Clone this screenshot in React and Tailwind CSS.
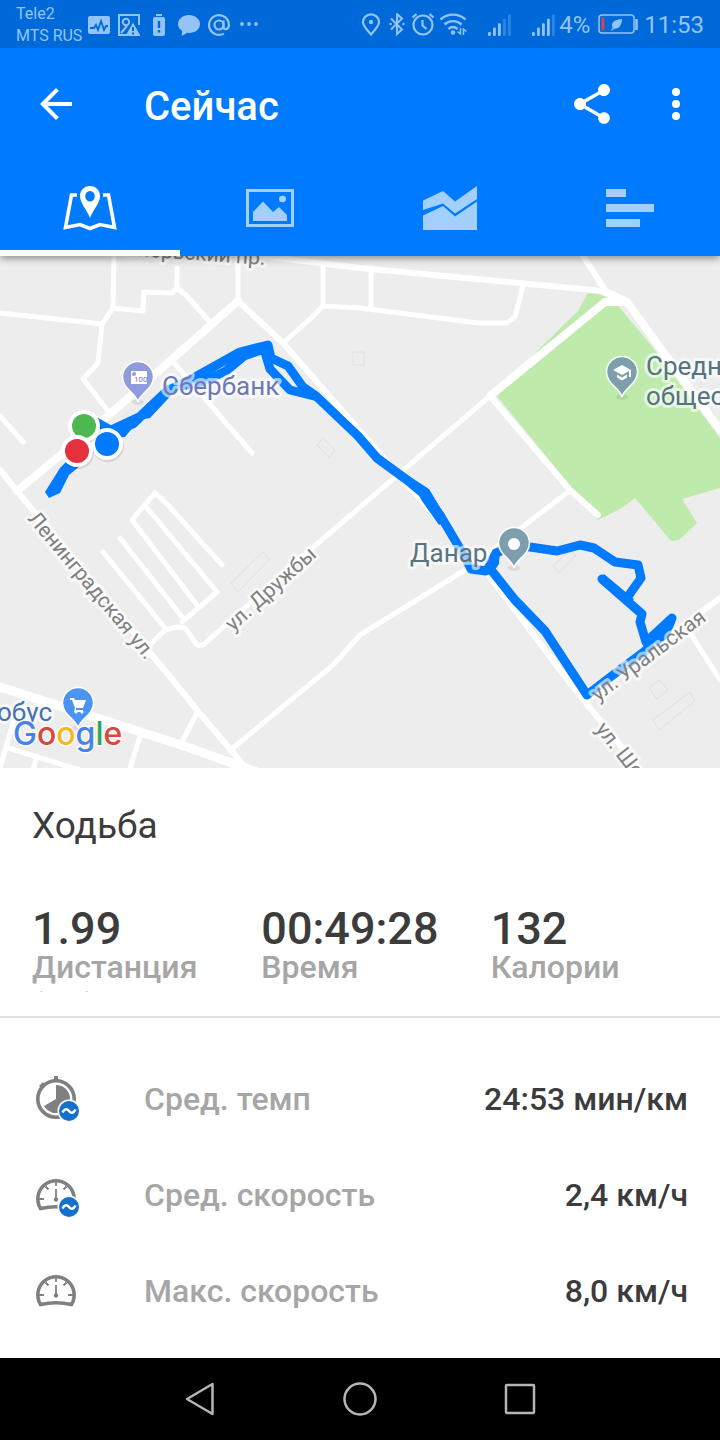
import React, { useState } from "react";

const stats = [
  { label: "Дистанция (км)", value: "1.99" },
  { label: "Время", value: "00:49:28" },
  { label: "Калории", value: "132" },
];

const details = [
  { icon: "pace", label: "Сред. темп", value: "24:53 мин/км" },
  { icon: "avgSpeed", label: "Сред. скорость", value: "2,4 км/ч" },
  { icon: "maxSpeed", label: "Макс. скорость", value: "8,0 км/ч" },
];

const SignalBars = ({ level, className }) => (
  <svg className={className} width="24" height="24" viewBox="0 0 24 24" fill="currentColor">
    {[0, 1, 2, 3, 4].map((i) => (
      <rect key={i} x={1 + i * 5} y={19 - i * 4.4} width="2.8" height={4 + i * 4.4} rx="1" opacity={i < level ? 1 : 0.3} />
    ))}
  </svg>
);

const StatusBar = () => (
  <div className="flex h-12 items-center justify-between bg-[#0069d9] px-4 pt-0.5 text-[#94c4f5]">
    <div className="flex items-center gap-2">
      <div className="-mr-0.5 text-base leading-[22px]">
        <div>Tele2</div>
        <div>MTS RUS</div>
      </div>
      <svg width="22" height="24" viewBox="0 0 22 24" fill="currentColor">
        <rect x="0" y="3" width="22" height="18" rx="2" />
        <path d="M2 15h4l2-3 2 5 3-9 3 9 2-4h2" fill="none" stroke="#0069d9" strokeWidth="1.8" />
      </svg>
      <svg width="22" height="24" viewBox="0 0 22 24" fill="none" stroke="currentColor" strokeWidth="2">
        <path d="M21 12V2H1v20h8" />
        <circle cx="8" cy="9" r="3.2" />
        <path d="M3 20l6-7" />
        <path d="M15 9.500L22.500 23H7.500z" fill="currentColor" stroke="none" />
        <path d="M15 14v4M15 19.500v2" stroke="#0069d9" />
      </svg>
      <svg width="22" height="24" viewBox="0 0 22 24" fill="currentColor">
        <path d="M8 1h6v2H8zM7 4h8a2 2 0 0 1 2 2v15a2 2 0 0 1-2 2H7a2 2 0 0 1-2-2V6a2 2 0 0 1 2-2z" />
        <path d="M11 8v7M11 17v2.500" stroke="#0069d9" strokeWidth="2.400" />
      </svg>
      <svg width="22" height="24" viewBox="0 0 22 24" fill="currentColor">
        <path d="M11 2C5 2 0 6 0 11c0 3 1.600 5.300 4.200 7-.2 1.600-.2 3-.9 4.500 2.500-.2 4.200-1.300 5.700-2.700.8.200 1.700.2 2 .2C17.500 20 22 16 22 11s-5-9-11-9z" />
      </svg>
      <svg width="22" height="24" viewBox="0 0 22 24" fill="none" stroke="currentColor" strokeWidth="2.200">
        <circle cx="11" cy="12" r="4.500" />
        <path d="M15.500 7.500V14c0 3.500 5.400 3 5.400-2a9.900 9.900 0 1 0-5 8.600" />
      </svg>
      <svg width="22" height="24" viewBox="0 0 22 24" fill="currentColor">
        <circle cx="4" cy="11" r="1.900" />
        <circle cx="11" cy="11" r="1.900" />
        <circle cx="18" cy="11" r="1.900" />
      </svg>
    </div>
    <div className="flex items-center gap-1">
      <svg width="22" height="24" viewBox="0 0 22 24" fill="none" stroke="currentColor" strokeWidth="2.200">
        <path d="M12 21.500C8 17 4 13 4 9.300a8 8 0 0 1 16 0C20 13 16 17 12 21.500z" />
        <circle cx="12" cy="9" r="2.200" fill="currentColor" stroke="none" />
      </svg>
      <svg width="20" height="24" viewBox="0 0 20 24" fill="none" stroke="currentColor" strokeWidth="2">
        <path d="M6 5.500l11 11-5 4.500V1l5 4.500-11 11" />
        <circle cx="5.500" cy="11" r="1.200" fill="currentColor" stroke="none" />
        <circle cx="18.500" cy="11" r="1.200" fill="currentColor" stroke="none" />
      </svg>
      <svg width="26" height="24" viewBox="0 0 26 24" fill="none" stroke="currentColor" strokeWidth="2.200">
        <circle cx="14" cy="12" r="9.500" />
        <path d="M13.500 7v5.500l4 3.500M3.500 4.500l4-3.500M24.500 4.500l-4-3.500" />
      </svg>
      <svg width="28" height="24" viewBox="0 0 28 24" fill="none" stroke="currentColor" strokeWidth="2.400">
        <path d="M1.500 6.500c7-6.500 18-6.500 25 0M5.500 11.500c5-4.500 12-4.500 17 0M9.500 16c3-2.600 6-2.600 9 0" />
        <circle cx="14" cy="19.500" r="2.200" fill="currentColor" stroke="none" />
        <path d="M21.500 15v6l-3-2.500M24.500 22v-6l3 2.500" strokeWidth="1.500" />
      </svg>
      <SignalBars level={3} className="ml-4" />
      <SignalBars level={4} className="ml-4" />
      <span className="text-2xl">4%</span>
      <svg className="ml-1" width="40" height="24" viewBox="0 0 40 24" fill="none" stroke="currentColor">
        <rect x="1" y="2" width="35" height="18" rx="3" strokeWidth="1.500" />
        <path d="M38.500 6v11" strokeWidth="2.500" />
        <path d="M5 4.500v13" stroke="#d8415a" strokeWidth="3" />
        <path d="M24 6c-6 .5-10 2.500-10 6.500 0 1 .3 1.700.7 2.200L13 17.500h1.500l1.300-1.800c4.700.8 8-3.200 8.200-9.700z" fill="currentColor" stroke="none" />
      </svg>
      <span className="ml-0.5 text-2xl">11:53</span>
    </div>
  </div>
);

const AppBar = () => (
  <div className="flex h-28 items-center pr-5 pl-8">
    <button aria-label="Назад">
      <svg width="48" height="48" viewBox="0 0 24 24" fill="currentColor">
        <path d="M20 11H7.830l5.590-5.590L12 4l-8 8 8 8 1.410-1.410L7.830 13H20v-2z" />
      </svg>
    </button>
    <h1 className="ml-16 flex-1 pt-1.5 text-[40px] leading-[52px] font-medium">Сейчас</h1>
    <button aria-label="Поделиться" className="mr-9">
      <svg width="48" height="48" viewBox="0 0 24 24" fill="currentColor">
        <path d="M18 16.080c-.76 0-1.440.3-1.960.77L8.910 12.700c.05-.23.09-.46.09-.7s-.04-.47-.09-.7l7.050-4.110c.54.5 1.250.81 2.040.81 1.660 0 3-1.340 3-3s-1.340-3-3-3-3 1.340-3 3c0 .24.04.47.09.7L8.040 9.810C7.500 9.310 6.790 9 6 9c-1.660 0-3 1.340-3 3s1.340 3 3 3c.79 0 1.500-.31 2.040-.81l7.120 4.160c-.05.21-.08.43-.08.65 0 1.610 1.310 2.920 2.920 2.920s2.920-1.310 2.920-2.920-1.310-2.920-2.920-2.920z" />
      </svg>
    </button>
    <button aria-label="Меню">
      <svg width="48" height="48" viewBox="0 0 24 24" fill="currentColor">
        <circle cx="12" cy="6" r="2" />
        <circle cx="12" cy="12" r="2" />
        <circle cx="12" cy="18" r="2" />
      </svg>
    </button>
  </div>
);

const tabs = [
  {
    id: "Карта",
    icon: (
      <>
        <path d="M17 12h-5.500L5.500 44.500 20 41.500l10 4 10-4 14.500 3L48.500 12H43" fill="none" stroke="currentColor" strokeWidth="3.600" />
        <path fillRule="evenodd" d="M30 3c-6 0-10 4.500-10 10 0 7 7 14 10 22 3-8 10-15 10-22 0-5.500-4-10-10-10zm0 5a4.800 5.200 0 0 1 0 10.400A4.800 5.200 0 0 1 30 8z" />
      </>
    ),
  },
  {
    id: "Фото",
    icon: (
      <>
        <path fillRule="evenodd" d="M6 6h48v38H6zM9 9v32h42V9z" />
        <path d="M13 38V29l10-10.500L33 29l6-5 8 8v6z" />
        <ellipse cx="42.500" cy="16" rx="3.500" ry="3.200" />
      </>
    ),
  },
  {
    id: "Графики",
    icon: (
      <>
        <path d="M3 17.500L23 8l12 10.500L57 3v13L35 30.500 23 20.500 3 27z" />
        <path d="M3 32.500l20-9.500 12 10.500L57 18.500V47H3z" />
      </>
    ),
  },
  { id: "Данные", icon: <path d="M6 6h20v8H6zM6 21h48v8H6zM6 36h34v8H6z" /> },
];

const Tabs = () => {
  const [active, setActive] = useState("Карта");

  return (
    <div role="tablist" className="grid h-24 grid-cols-4">
      {tabs.map((tab) => (
        <button
          key={tab.id}
          role="tab"
          aria-label={tab.id}
          aria-selected={active === tab.id}
          onClick={() => setActive(tab.id)}
          className={
            active === tab.id
              ? "flex items-center justify-center border-y-6 border-t-transparent border-b-white text-white"
              : "flex items-center justify-center border-y-6 border-transparent text-[#a3cfff]"
          }
        >
          <svg width="60" height="50" viewBox="0 0 60 50" fill="currentColor">
            {tab.icon}
          </svg>
        </button>
      ))}
    </div>
  );
};

// Teardrop marker, the tip is at x, y
const Pin = ({ x, y, color, children }) => (
  <g transform={`translate(${x} ${y})`}>
    <ellipse cx="0" cy="0" rx="6" ry="3" fill="#000" opacity="0.08" />
    <path d="M0 0C-2-9-15.500-13-15.500-25a15.500 15.500 0 0 1 31 0C15.500-13 2-9 0 0z" fill={color} stroke="#fff" strokeWidth="1.500" />
    {children}
  </g>
);

const Dot = ({ x, y, color }) => (
  <g>
    <circle cx={x + 1} cy={y + 2} r="16" fill="#000" opacity="0.1" />
    <circle cx={x} cy={y} r="14" fill={color} stroke="#fff" strokeWidth="4" />
  </g>
);

const RouteMap = () => (
  <svg className="block h-auto w-full bg-[#ededed]" viewBox="0 256 720 512" role="img" aria-label="Карта маршрута">
    <path
      d="M588 293l19 2 13 13 30 36 70 94v50l-38 11 15 24-18 17-8 1-36-43-13 10-24 12-101-124 43-48 38-37z"
      fill="#beebab"
    />

    {/* buildings */}
    <g fill="none" stroke="#e0e0e0">
      <path d="M353 352h11v13h-11zM323 438l12 12-6 8-12-13zM231 583l32-31 6 8-31 32zM553 566l16-15 7 4-17 18zM649 688l10-8 9 10-11 9zM653 720l37-28 5 9-36 29z" />
    </g>

    {/* roads */}
    <g fill="none" stroke="#fff" strokeLinejoin="round" strokeLinecap="round">
      <g strokeWidth="5">
        <path d="M0 313l102 11M114 256l-1 52-11 16-4 39-15 16 25 32M113 308l30 3 1-19 28 1 5-5v-20M177 288l10 8 22 25" />
        <path d="M238 256v45M283 343l27-24 13-13v-42M323 306l37 2 118 15h29l8-6 8-32M371 268v41" />
        <path d="M0 416l23 26M175 364l77 89" />
        <path d="M143 507l-11 13 65 85M147 508l70 84-35 30M143 507l12-14 12 11 55 61M120 538l62 79M103 552l62 76" />
        <path d="M490 396L310 550l-107 95h-6l-12-17-8-1-12 3-17 17" />
        <path d="M568 492L470 567 360 635l-27 30-100 83M197 713l-14 27M140 737l-10 31M13 723L0 768M8 748l72 22M37 756l-4 14M690 633l30 47" />
      </g>
      <g strokeWidth="6">
        <path d="M0 470l17 21 131 159 49 60 48 57M490 396l80 94 28 25M238 301l45 42 77 88 80 90M487 573l86 114 77 95M587 700l133-102" />
        <path d="M262 256l98 12 127 12 116 11" />
        <path d="M583 256l22 34" />
      </g>
      <path d="M17 491l93-77 128-113M490 396l115-94h22M603 291l24 11 93 128" strokeWidth="8" />
      <path d="M0 687l110 35 77 25 70 25" strokeWidth="9" />
    </g>

    {/* walked route */}
    <g fill="none" stroke="#007aff" strokeWidth="9" strokeLinejoin="round" strokeLinecap="round">
      <path d="M96 422L112 431 133 424 167 391 197 376 240 352 268 345 271 358 288 366 303 387 316 396 358 436 377 458 407 480 425 495 440 515 465 557 471 569 486 571 493 561 496 553 515 545 530 547 557 551 580 545 594 548 615 562 638 565 641 578 629 595" />
      <path d="M602 579L642 614 640 622 646 642 672 618 666 633 645 651 613 675 587 695 545 631 515 600 492 571" />
      <path d="M182 386l22-5 22-10 18-15 20-7 6 20 20 21 24 6" />
    </g>
    <g fill="#007aff">
      <path d="M45 492l15-24 20-20 16 2-15 15-12 10-9 18-11 5zM107 427l30-14 30-28 12 2-29 31-11 2-14 17-12 1zM409 476l20 13 18 30-8 6-17-24zM600 583l4-9 30 25-6 5zM642 640l28-24-8 22-18 10zM486 562l5-9 9-4-1 15-7 10z" />
    </g>

    <Pin x={138} y={402} color="#8f9bdc">
      <rect x="-7" y="-31" width="16" height="13" fill="#fff" />
      <circle cx="-4" cy="-28" r="2" fill="#8f9bdc" />
      <text x="-4" y="-20" className="font-[Roboto,sans-serif] text-[8px]" fill="#6f7bc4">100</text>
    </Pin>
    <Pin x={622} y={397} color="#7d9ead">
      <path d="M-9-27l9-5 9 5v7h-2v-6l-7 4zM-5-22.500l5 3 5-3v3l-5 3-5-3z" fill="#fff" />
    </Pin>
    <Pin x={514} y={568} color="#7d9ead">
      <circle cx="0" cy="-24" r="6" fill="#fff" />
    </Pin>
    <Pin x={78} y={728} color="#4b95f0">
      <path d="M-8-30h4l1 2H8l-3 8h-7v2h7v2H-4l1-4-3-8h-2z" fill="#fff" />
      <circle cx="-2" cy="-16" r="1.500" fill="#fff" />
      <circle cx="4" cy="-16" r="1.500" fill="#fff" />
    </Pin>

    <Dot x={107} y={444} color="#007aff" />
    <Dot x={84} y={426} color="#4db84f" />
    <Dot x={77} y={451} color="#e6303c" />

    <g
      className="font-[Roboto,sans-serif]"
      stroke="#fff"
      strokeOpacity="0.6"
      strokeWidth="6"
      strokeLinejoin="round"
      paintOrder="stroke"
    >
      <g className="text-[26px]">
        <text x="162" y="395" fill="#7077b5">Сбербанк</text>
        <text x="646" y="375" fill="#56737f">Средняя</text>
        <text x="646" y="405" fill="#56737f">общеобразовательная</text>
        <text x="410" y="562" fill="#5b7480">Данар</text>
        <text x="52" y="721" textAnchor="end" fill="#4472ae">Глобус</text>
      </g>
      <g className="text-[21px]" fill="#808080">
        <text transform="translate(265 265) rotate(4)" textAnchor="end">Октябрьский пр.</text>
        <text transform="translate(27 519) rotate(50)">Ленинградская ул.</text>
        <text transform="translate(233 632) rotate(-42)">ул. Дружбы</text>
        <text transform="translate(598 702) rotate(-37)">ул. Уральская</text>
        <text transform="translate(595 729) rotate(52)">ул. Шоссейная</text>
      </g>
    </g>

    <text
      x="13"
      y="745"
      className="font-[Inter,sans-serif] text-[32px] font-medium"
      stroke="#fff"
      strokeOpacity="0.8"
      strokeWidth="3"
      paintOrder="stroke"
    >
      <tspan fill="#4682e8">G</tspan>
      <tspan fill="#da483b">o</tspan>
      <tspan fill="#f2b91d">o</tspan>
      <tspan fill="#4682e8">g</tspan>
      <tspan fill="#34a457">l</tspan>
      <tspan fill="#da483b">e</tspan>
    </text>
  </svg>
);

const Badge = () => (
  <g>
    <circle cx="37" cy="36" r="11.500" fill="#fff" />
    <circle cx="37" cy="36" r="10" fill="#1470cc" />
    <path d="M30.500 37.500c2-4 4.500-4 6.500-1.500s4.500 2.500 6.500-1.500" fill="none" stroke="#fff" strokeWidth="2.600" />
  </g>
);

const Gauge = () => (
  <g fill="none" stroke="#808080">
    <path d="M8.500 37.500a18.200 18.200 0 1 1 31 0q-15.500-3.500-31 0z" strokeWidth="3.600" />
    <path d="M24 10v5M24 18v10M13.500 15.500l3 3M34.500 15.500l-3 3M7 28h5M41 28h-5" strokeWidth="1.800" />
    <circle cx="24" cy="28.500" r="2.200" fill="#808080" stroke="none" />
  </g>
);

const DetailIcon = ({ name }) => (
  <svg width="48" height="48" viewBox="0 0 48 48">
    {name === "pace" ? (
      <g>
        <path d="M22 1h4v5h-4zM7 11l4-4 2 3-3 3z" fill="#808080" />
        <circle cx="24" cy="24" r="18.200" fill="none" stroke="#808080" strokeWidth="3.600" />
        <path d="M24 24V10a14 14 0 1 1-12 21z" fill="#808080" />
      </g>
    ) : (
      <Gauge />
    )}
    {name !== "maxSpeed" && <Badge />}
  </svg>
);

const NavBar = () => (
  <nav className="mt-auto flex h-[82px] items-center justify-center gap-28 bg-black text-[#b5b5b5]">
    <button aria-label="Назад">
      <svg width="48" height="48" viewBox="0 0 48 48" fill="none" stroke="currentColor" strokeWidth="2.500" strokeLinejoin="round">
        <path d="M36.500 9v30L11 24z" />
      </svg>
    </button>
    <button aria-label="Домой">
      <svg width="48" height="48" viewBox="0 0 48 48" fill="none" stroke="currentColor" strokeWidth="2.500">
        <circle cx="24" cy="24" r="15.500" />
      </svg>
    </button>
    <button aria-label="Недавние">
      <svg width="48" height="48" viewBox="0 0 48 48" fill="none" stroke="currentColor" strokeWidth="2.500">
        <rect x="10" y="10" width="28" height="28" rx="1" />
      </svg>
    </button>
  </nav>
);

const App = () => {
  return (
    <div className="flex min-h-screen flex-col bg-white font-[Roboto,sans-serif] text-[#3c3c3c]">
      <header className="relative bg-[#007aff] text-white shadow-[0_2px_8px_rgba(0,0,0,0.45)]">
        <StatusBar />
        <AppBar />
        <Tabs />
      </header>

      <main>
        <RouteMap />

        <section className="border-b-2 border-[#e0e0e0] pt-8 pb-6">
          <h2 className="pl-8 text-[37px] leading-[52px]">Ходьба</h2>
          <dl className="mt-13 grid grid-cols-3 pl-8 font-medium">
            {stats.map((stat) => (
              <div key={stat.label} className="flex flex-col-reverse">
                <dt className="h-12 overflow-hidden pt-1 pr-8 text-[32px] leading-[38px] text-[#a6a6a6]">{stat.label}</dt>
                <dd className="h-10 overflow-hidden text-[45px] leading-[50px]">{stat.value}</dd>
              </div>
            ))}
          </dl>
        </section>

        <dl className="px-8 pt-[33px] pb-4 text-[32px] font-medium">
          {details.map((item) => (
            <div key={item.label} className="flex h-24 items-center">
              <DetailIcon name={item.icon} />
              <dt className="ml-16 flex-1 text-[#a6a6a6]">{item.label}</dt>
              <dd>{item.value}</dd>
            </div>
          ))}
        </dl>
      </main>

      <NavBar />
    </div>
  );
};

export default App;
